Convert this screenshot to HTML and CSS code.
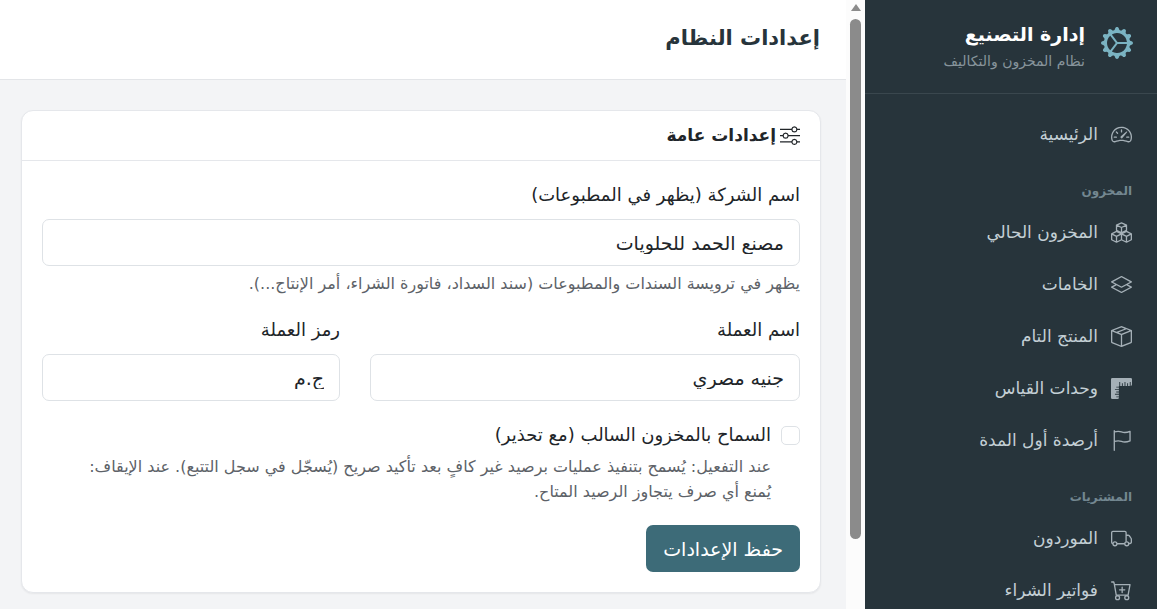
FILE: index.html
```html
<!DOCTYPE html>
<html lang="ar" dir="rtl">
<head>
<meta charset="utf-8">
<meta name="viewport" content="width=device-width, initial-scale=1">
<title>إعدادات النظام</title>
<link rel="stylesheet" href="styles.css">
</head>
<body>
<div class="app">
  <aside class="sidebar">
    <div class="sidebar-content">
      <div class="brand">
        <svg class="brand-icon" viewBox="0 0 16 16" fill="currentColor" aria-hidden="true"><path d="M7.068.727c.243-.97 1.62-.97 1.864 0l.071.286a.96.96 0 0 0 1.622.434l.205-.211c.695-.719 1.888-.03 1.613.931l-.08.284a.96.96 0 0 0 1.187 1.187l.283-.081c.96-.275 1.65.918.931 1.613l-.211.205a.96.96 0 0 0 .434 1.622l.286.071c.97.243.97 1.62 0 1.864l-.286.071a.96.96 0 0 0-.434 1.622l.211.205c.719.695.03 1.888-.931 1.613l-.284-.08a.96.96 0 0 0-1.187 1.187l.081.283c.275.96-.918 1.65-1.613.931l-.205-.211a.96.96 0 0 0-1.622.434l-.071.286c-.243.97-1.62.97-1.864 0l-.071-.286a.96.96 0 0 0-1.622-.434l-.205.211c-.695.719-1.888.03-1.613-.931l.08-.284a.96.96 0 0 0-1.186-1.187l-.284.081c-.96.275-1.65-.918-.931-1.613l.211-.205a.96.96 0 0 0-.434-1.622l-.286-.071c-.97-.243-.97-1.62 0-1.864l.286-.071a.96.96 0 0 0 .434-1.622l-.211-.205c-.719-.695-.03-1.888.931-1.613l.284.08a.96.96 0 0 0 1.187-1.186l-.081-.284c-.275-.96.918-1.65 1.613-.931l.205.211a.96.96 0 0 0 1.622-.434zM12.973 8.5H8.25l-2.834 3.779A4.998 4.998 0 0 0 12.973 8.5m0-1a4.998 4.998 0 0 0-7.557-3.779l2.834 3.78zM5.048 3.967l-.087.065zm-.431.355A4.98 4.98 0 0 0 3.002 8c0 1.455.622 2.765 1.615 3.678L7.375 8zm.344 7.646.087.065z"/></svg>
        <div class="brand-text">
          <strong class="brand-name">إدارة التصنيع</strong>
          <span class="brand-sub">نظام المخزون والتكاليف</span>
        </div>
      </div>
      <nav class="nav">
        <a class="nav-link" href="#"><svg class="nav-icon" viewBox="0 0 16 16" fill="currentColor" aria-hidden="true"><path d="M8 4a.5.5 0 0 1 .5.5V6a.5.5 0 0 1-1 0V4.5A.5.5 0 0 1 8 4M3.732 5.732a.5.5 0 0 1 .707 0l.915.914a.5.5 0 1 1-.708.708l-.914-.915a.5.5 0 0 1 0-.707M2 10a.5.5 0 0 1 .5-.5h1.586a.5.5 0 0 1 0 1H2.5A.5.5 0 0 1 2 10m9.5 0a.5.5 0 0 1 .5-.5h1.5a.5.5 0 0 1 0 1H12a.5.5 0 0 1-.5-.5m.754-4.246a.39.39 0 0 0-.527-.02L7.547 9.31a.91.91 0 1 0 1.302 1.258l3.434-4.297a.39.39 0 0 0-.029-.518z"/><path fill-rule="evenodd" d="M0 10a8 8 0 1 1 15.547 2.661c-.442 1.253-1.845 1.602-2.932 1.25C11.309 13.488 9.475 13 8 13c-1.474 0-3.31.488-4.615.911-1.087.352-2.49.003-2.932-1.25A8 8 0 0 1 0 10m8-7a7 7 0 0 0-6.603 9.329c.203.575.923.876 1.68.63C4.397 12.533 6.358 12 8 12s3.604.532 4.923.96c.757.245 1.477-.056 1.68-.631A7 7 0 0 0 8 3"/></svg>الرئيسية</a>

        <h2 class="nav-heading">المخزون</h2>
        <a class="nav-link" href="#"><svg class="nav-icon" viewBox="0 0 16 16" fill="none" stroke="currentColor" stroke-linejoin="round" aria-hidden="true"><path d="M8 .6 11.800 2.400v4L8 8.200 4.200 6.400v-4zM4.200 2.400 8 4.200l3.800-1.800M8 4.200v4M4.200 7.200 8 9v4.500l-3.800 1.900-3.700-1.900V9zM.5 9l3.700 1.900L8 9M4.200 10.900v4.500M11.800 7.200 8 9v4.500l3.800 1.900 3.700-1.900V9zM8 9l3.800 1.900L15.500 9M11.800 10.900v4.500"/></svg>المخزون الحالي</a>
        <a class="nav-link" href="#"><svg class="nav-icon" viewBox="0 0 16 16" fill="currentColor" aria-hidden="true"><path d="M8.235 1.559a.5.5 0 0 0-.47 0l-7.5 4a.5.5 0 0 0 0 .882L3.188 8 .264 9.559a.5.5 0 0 0 0 .882l7.5 4a.5.5 0 0 0 .47 0l7.5-4a.5.5 0 0 0 0-.882L12.813 8l2.922-1.559a.5.5 0 0 0 0-.882zm3.515 7.008L14.438 10 8 13.433 1.562 10 4.25 8.567l3.515 1.874a.5.5 0 0 0 .47 0zM8 9.433 1.562 6 8 2.567 14.438 6z"/></svg>الخامات</a>
        <a class="nav-link" href="#"><svg class="nav-icon" viewBox="0 0 16 16" fill="currentColor" aria-hidden="true"><path d="M8.186 1.113a.5.5 0 0 0-.372 0L1.846 3.5l2.404.961L10.404 2zm3.564 1.426L5.596 5 8 5.961 14.154 3.5zm3.25 1.7-6.5 2.6v7.922l6.5-2.6V4.24zM7.5 14.762V6.838L1 4.239v7.923zM7.443.184a1.5 1.5 0 0 1 1.114 0l7.129 2.852A.5.5 0 0 1 16 3.5v8.662a1 1 0 0 1-.629.928l-7.185 2.874a.5.5 0 0 1-.372 0L.63 13.09a1 1 0 0 1-.63-.928V3.5a.5.5 0 0 1 .314-.464z"/></svg>المنتج التام</a>
        <a class="nav-link" href="#"><svg class="nav-icon" viewBox="0 0 16 16" aria-hidden="true"><path fill="currentColor" fill-rule="evenodd" d="M1 0h14a1 1 0 0 1 1 1v4a1 1 0 0 1-1 1V3h-.7v3h-1.300V4h-.7v2H11V3h-.7v3H9V4h-.7v2H7V3h-.7v3H6v.6H4v.7h2v1H3v.7h3v1.300H4v.7h2V12H3v.7h3v1.300H4v.7h2V15a1 1 0 0 1-1 1H1a1 1 0 0 1-1-1V1a1 1 0 0 1 1-1"/></svg>وحدات القياس</a>
        <a class="nav-link" href="#"><svg class="nav-icon" viewBox="0 0 16 16" fill="none" stroke="currentColor" stroke-linecap="round" stroke-linejoin="round" aria-hidden="true"><path d="M2.500.5v15M2.500 1.500C4.500 1 6 .8 8 1.500s4 .6 6.500-.5v7.300c-2.500 1-4.500 1.200-6.500.4s-3.500-.6-5.500 0"/></svg>أرصدة أول المدة</a>

        <h2 class="nav-heading">المشتريات</h2>
        <a class="nav-link" href="#"><svg class="nav-icon" viewBox="0 0 16 16" fill="none" stroke="currentColor" aria-hidden="true"><path d="M1.500 11.900a1.100 1.100 0 0 1-1-1.100V3.500a1 1 0 0 1 1-1h9a1 1 0 0 1 1 1v7M11.500 5.500H13a1.200 1.200 0 0 1 .9.400l1.200 1.600a1.800 1.800 0 0 1 .4 1.100v2a1.100 1.100 0 0 1-1.100 1.200h-.9M4.500 12h6"/><circle cx="3" cy="12" r="1.500"/><circle cx="12" cy="12" r="1.500"/></svg>الموردون</a>
        <a class="nav-link" href="#"><svg class="nav-icon" viewBox="0 0 16 16" fill="none" stroke="currentColor" stroke-linecap="round" stroke-linejoin="round" aria-hidden="true"><path d="M.5 1.500h1.600l.5 2h11.900l-1.500 8H4L2.600 3.500M8.500 5.500v4M6.500 7.500h4"/><circle cx="5" cy="13.500" r="1.500"/><circle cx="12" cy="13.500" r="1.500"/></svg>فواتير الشراء</a>
      </nav>
    </div>
    <div class="scrollbar" aria-hidden="true"><span class="scroll-arrow"></span><span class="scroll-thumb"></span></div>
  </aside>

  <main class="main">
    <header class="topbar"><h1 class="page-title">إعدادات النظام</h1></header>
    <section class="card">
      <h2 class="card-header"><svg class="card-icon" viewBox="0 0 16 16" fill="currentColor" aria-hidden="true"><path fill-rule="evenodd" d="M11.500 2a1.500 1.500 0 1 0 0 3 1.500 1.500 0 0 0 0-3M9.050 3a2.500 2.500 0 0 1 4.900 0H16v1h-2.050a2.500 2.500 0 0 1-4.900 0H0V3zM4.500 7a1.500 1.500 0 1 0 0 3 1.500 1.500 0 0 0 0-3M2.050 8a2.500 2.500 0 0 1 4.900 0H16v1H6.950a2.500 2.500 0 0 1-4.900 0H0V8zm9.450 4a1.500 1.500 0 1 0 0 3 1.500 1.500 0 0 0 0-3m-2.450 1a2.500 2.500 0 0 1 4.900 0H16v1h-2.050a2.500 2.500 0 0 1-4.900 0H0v-1z"/></svg>إعدادات عامة</h2>
      <form class="card-body">
        <div class="field">
          <label class="label" for="company">اسم الشركة (يظهر في المطبوعات)</label>
          <input class="input" id="company" type="text" value="مصنع الحمد للحلويات">
          <p class="help">يظهر في ترويسة السندات والمطبوعات (سند السداد، فاتورة الشراء، أمر الإنتاج...).</p>
        </div>
        <div class="row">
          <div class="field">
            <label class="label" for="currency">اسم العملة</label>
            <input class="input" id="currency" type="text" value="جنيه مصري">
          </div>
          <div class="field">
            <label class="label" for="symbol">رمز العملة</label>
            <input class="input" id="symbol" type="text" value="ج.م">
          </div>
        </div>
        <div class="check">
          <input class="checkbox" id="negative" type="checkbox">
          <div class="check-text">
            <label class="check-label" for="negative">السماح بالمخزون السالب (مع تحذير)</label>
            <p class="help">عند التفعيل: يُسمح بتنفيذ عمليات برصيد غير كافٍ بعد تأكيد صريح (يُسجّل في سجل التتبع). عند الإيقاف: يُمنع أي صرف يتجاوز الرصيد المتاح.</p>
          </div>
        </div>
        <button class="button" type="button">حفظ الإعدادات</button>
      </form>
    </section>
  </main>
</div>
</body>
</html>
```
FILE: styles.css
```css
* {
  box-sizing: border-box;
}

body {
  margin: 0;
  font-family: "DejaVu Sans", sans-serif;
  font-size: 18px;
  line-height: 28px;
  color: #212529;
  background: #f3f4f6;
}

h1, h2, p {
  margin: 0;
}

.app {
  display: flex;
  height: 100vh;
  overflow: hidden;
}

.sidebar {
  display: flex;
  flex: none;
  width: 311px;
  background: #27343b;
}

.sidebar-content {
  flex: 1;
  overflow: hidden;
}

.brand {
  display: flex;
  align-items: center;
  gap: 16px;
  height: 94px;
  padding: 0 24px 8px;
  border-bottom: 1px solid #3a474e;
}

.brand-icon {
  width: 32px;
  height: 32px;
  color: #7ab3c2;
}

.brand-text {
  display: flex;
  flex-direction: column;
  padding-top: 8px;
}

.brand-name {
  font-size: 19px;
  color: #fff;
}

.brand-sub {
  font-size: 14px;
  line-height: 26px;
  color: #87949c;
}

.nav {
  display: flex;
  flex-direction: column;
  padding-top: 14px;
}

.nav-link {
  display: flex;
  align-items: center;
  gap: 13px;
  height: 52px;
  padding: 0 25px;
  font-size: 17px;
  color: #c3cfd5;
  text-decoration: none;
  white-space: nowrap;
}

.nav-icon {
  width: 21px;
  height: 21px;
  color: #a5b0b7;
}

.nav-heading {
  padding: 16px 25px 0;
  font-size: 12px;
  line-height: 30px;
  color: #738790;
}

.scrollbar {
  display: flex;
  flex-direction: column;
  align-items: center;
  gap: 8px;
  width: 19px;
  padding-top: 4px;
  background: #fcfcfc;
}

.scroll-arrow {
  border: 5px solid transparent;
  border-top: 0;
  border-bottom: 7px solid #8b8b8b;
}

.scroll-thumb {
  width: 11px;
  height: 86%;
  border-radius: 6px;
  background: #8b8b8b;
}

.main {
  flex: 1;
  min-width: 0;
}

.topbar {
  height: 80px;
  padding: 24px 26px;
  background: #fff;
  border-bottom: 1px solid #e3e5e8;
}

.page-title {
  font-size: 21px;
  line-height: 28px;
  color: #27343b;
}

.card {
  margin: 30px 25px 16px 21px;
  background: #fff;
  border: 1px solid #e5e7eb;
  border-radius: 12px;
  box-shadow: 0 1px 2px rgba(0, 0, 0, .06);
}

.card-header {
  display: flex;
  align-items: center;
  gap: 4px;
  height: 50px;
  padding: 0 20px 2px;
  font-size: 17px;
  border-bottom: 1px solid #e5e7eb;
}

.card-icon {
  width: 20px;
  height: 20px;
}

.card-body {
  padding: 20px;
}

.field {
  display: flex;
  flex-direction: column;
}

.label {
  margin-bottom: 10px;
}

.input {
  width: 100%;
  height: 47px;
  padding: 0 15px;
  font: inherit;
  font-size: 19px;
  color: inherit;
  background: #fff;
  border: 1px solid #dee2e6;
  border-radius: 7px;
}

.help {
  padding-top: 5px;
  font-size: 16px;
  line-height: 25px;
  color: #5d6268;
}

.row {
  display: grid;
  grid-template-columns: 430fr 298fr;
  gap: 30px;
  margin: 20px 0;
}

.check {
  display: flex;
  gap: 10px;
}

.check-text {
  padding-inline-end: 28px;
}

.checkbox {
  flex: none;
  width: 19px;
  height: 19px;
  margin: 5px 0;
  appearance: none;
  background: #fff;
  border: 1px solid #dee2e6;
  border-radius: 5px;
}

.button {
  display: block;
  height: 47px;
  margin-top: 21px;
  padding: 0 17px;
  font: inherit;
  font-size: 19px;
  color: #fff;
  background: #3d6b78;
  border: 0;
  border-radius: 7px;
}
```
